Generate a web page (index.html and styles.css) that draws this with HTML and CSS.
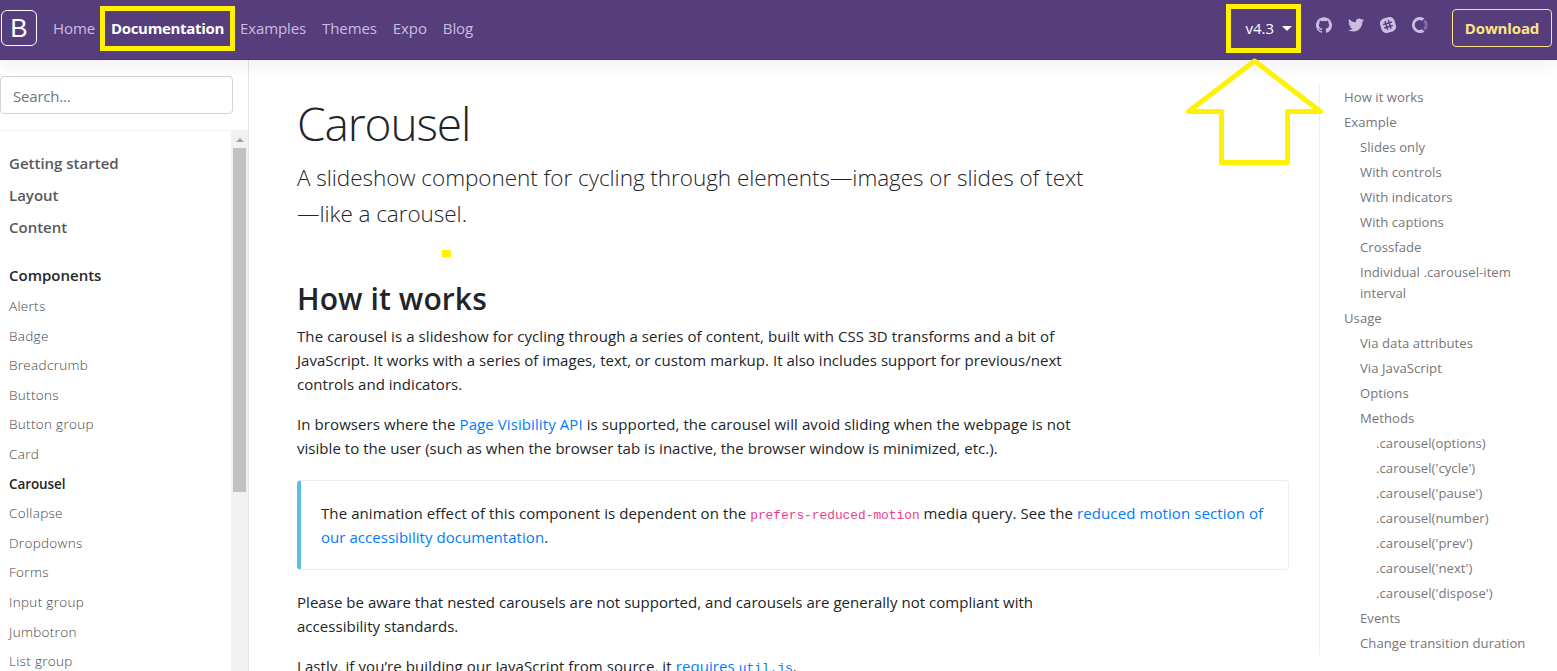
FILE: index.html
```html
<!DOCTYPE html>
<html lang="en">
<head>
<meta charset="utf-8">
<title>Carousel · Bootstrap</title>
<link rel="stylesheet" href="styles.css">
</head>
<body>
<header class="navbar">
  <a class="brand">B</a>
  <nav class="nav">
    <a>Home</a><a class="active">Documentation</a><a>Examples</a><a>Themes</a><a>Expo</a><a>Blog</a>
  </nav>
  <div class="version">v4.3<span class="caret"></span></div>
  <div class="social">
    <svg viewBox="0 0 24 24"><path d="M12 .297c-6.63 0-12 5.373-12 12 0 5.303 3.438 9.8 8.205 11.385.6.113.82-.258.82-.577 0-.285-.01-1.04-.015-2.04-3.338.724-4.042-1.61-4.042-1.61C4.422 18.07 3.633 17.7 3.633 17.7c-1.087-.744.084-.729.084-.729 1.205.084 1.838 1.236 1.838 1.236 1.07 1.835 2.809 1.305 3.495.998.108-.776.417-1.305.76-1.605-2.665-.3-5.466-1.332-5.466-5.93 0-1.31.465-2.38 1.235-3.22-.135-.303-.54-1.523.105-3.176 0 0 1.005-.322 3.3 1.23.96-.267 1.98-.399 3-.405 1.02.006 2.04.138 3 .405 2.28-1.552 3.285-1.23 3.285-1.23.645 1.653.24 2.873.12 3.176.765.84 1.23 1.91 1.23 3.22 0 4.61-2.805 5.625-5.475 5.92.42.36.81 1.096.81 2.22 0 1.606-.015 2.896-.015 3.286 0 .315.21.69.825.57C20.565 22.092 24 17.592 24 12.297c0-6.627-5.373-12-12-12"/></svg>
    <svg viewBox="0 0 24 24"><path d="M23.954 4.569c-.885.389-1.83.654-2.825.775 1.014-.611 1.794-1.574 2.163-2.723-.951.555-2.005.959-3.127 1.184-.896-.959-2.173-1.559-3.591-1.559-2.717 0-4.92 2.203-4.92 4.917 0 .39.045.765.127 1.124C7.691 8.094 4.066 6.13 1.64 3.161c-.427.722-.666 1.561-.666 2.475 0 1.71.87 3.213 2.188 4.096-.807-.026-1.566-.248-2.228-.616v.061c0 2.385 1.693 4.374 3.946 4.827-.413.111-.849.171-1.296.171-.314 0-.615-.03-.916-.086.631 1.953 2.445 3.377 4.604 3.417-1.68 1.319-3.809 2.105-6.102 2.105-.39 0-.779-.023-1.17-.067 2.189 1.394 4.768 2.209 7.557 2.209 9.054 0 13.999-7.496 13.999-13.986 0-.209 0-.42-.015-.63.961-.689 1.8-1.56 2.46-2.548z"/></svg>
    <svg viewBox="0 0 24 24"><g transform="rotate(-17 12 12)"><rect x=".8" y=".8" width="22.400" height="22.400" rx="7.5"/><path class="hash" d="M9.4 5.2v13.600M14.6 5.2v13.600M5.2 9.4h13.600M5.2 14.6h13.600"/></g></svg>
    <svg viewBox="0 0 24 24"><path d="M18.6 2A12 12 0 1 0 18.600 22L15.300 18.300A7.300 7.300 0 1 1 15.300 5.700z"/><path opacity=".4" d="M20.200 3.600A12 12 0 0 1 20.200 20.400L17.200 17.200A7.600 7.600 0 0 0 17.200 6.800z"/></svg>
  </div>
  <a class="download">Download</a>
</header>
<div class="page">
  <aside class="sidebar">
    <div class="searchbar"><div class="search">Search...</div></div>
    <div class="scroller">
      <nav class="links">
        <a class="group">Getting started</a>
        <a class="group">Layout</a>
        <a class="group">Content</a>
        <a class="group current">Components</a>
        <ul>
          <li>Alerts</li><li>Badge</li><li>Breadcrumb</li><li>Buttons</li><li>Button group</li><li>Card</li><li class="on">Carousel</li><li>Collapse</li><li>Dropdowns</li><li>Forms</li><li>Input group</li><li>Jumbotron</li><li>List group</li>
        </ul>
      </nav>
      <div class="scrollbar"><i class="up"></i><i class="thumb"></i></div>
    </div>
  </aside>
  <main class="content">
    <h1>Carousel</h1>
    <p class="lead">A slideshow component for cycling through elements—images or slides of text<br>—like a carousel.</p>
    <h2>How it works</h2>
    <p><span class="open">The carousel is a slideshow for cycling through a series of content, built with CSS 3D transforms and a bit of</span><br>JavaScript. It works with a series of images, text, or custom markup. It also includes support for previous/next<br>controls and indicators.</p>
    <p><span class="open">In browsers where the <a>Page Visibility API</a> is supported, the carousel will avoid sliding when the webpage is not</span><br>visible to the user (such as when the browser tab is inactive, the browser window is minimized, etc.).</p>
    <div class="callout"><span class="open">The animation effect of this component is dependent on the <code>prefers-reduced-motion</code> media query. See the <a>reduced motion section of</a></span><br><a>our accessibility documentation</a>.</div>
    <p>Please be aware that nested carousels are not supported, and carousels are generally not compliant with<br>accessibility standards.</p>
    <p><span class="open">Lastly, if you’re building our JavaScript from source, it <a>requires <code>util.js</code></a>.</span></p>
  </main>
  <nav class="toc">
    <ul>
      <li>How it works</li>
      <li>Example
        <ul><li>Slides only</li><li>With controls</li><li>With indicators</li><li>With captions</li><li>Crossfade</li><li>Individual .carousel-item<br>interval</li></ul>
      </li>
      <li>Usage
        <ul><li>Via data attributes</li><li>Via JavaScript</li><li>Options</li><li>Methods
          <ul><li>.carousel(options)</li><li>.carousel('cycle')</li><li>.carousel('pause')</li><li>.carousel(number)</li><li>.carousel('prev')</li><li>.carousel('next')</li><li>.carousel('dispose')</li></ul>
        </li><li>Events</li><li>Change transition duration</li></ul>
      </li>
    </ul>
  </nav>
</div>
<svg class="marks" viewBox="0 0 1557 671">
  <rect x="102.5" y="8.5" width="130" height="40"/>
  <rect x="1228.5" y="6.5" width="70" height="44"/>
  <path d="M1254.500 61L1188.500 111.500H1221.500V162.500H1287.500V111.500H1320.500z"/>
  <rect class="dot" x="442" y="250" width="9" height="7"/>
</svg>
</body>
</html>
```
FILE: styles.css
```css
* { box-sizing: border-box; }
body {
  margin: 0;
  height: 671px;
  overflow: hidden;
  background: #fff;
  color: #212529;
  font: 15px/24px "Open Sans", "Noto Sans", sans-serif;
  white-space: nowrap;
}
ul { list-style: none; margin: 0; padding: 0; }
a { color: #007bff; text-decoration: none; }

.navbar {
  position: relative;
  z-index: 2;
  display: flex;
  align-items: center;
  height: 60px;
  padding: 0 5px 4px 1px;
  background: #563d7c;
  box-shadow: 0 8px 16px rgba(0, 0, 0, .05), inset 0 -1px 0 rgba(0, 0, 0, .1);
}
.brand {
  width: 36px;
  height: 36px;
  border: 1px solid #fff;
  border-radius: 6px;
  color: #fff;
  font: 26px/34px "Liberation Sans", sans-serif;
  text-align: center;
}
.nav { display: flex; flex: 1; margin-left: 16px; gap: 16px; }
.nav a { color: #cbbde2; letter-spacing: -.1px; }
.nav .active { color: #fff; font-weight: 700; letter-spacing: -.33px; }
.version { display: flex; align-items: center; gap: 8px; color: #fff; margin-right: 24px; }
.caret { border: 5px solid transparent; border-top-color: #fff; border-bottom: 0; }
.social { display: flex; gap: 16px; margin: 0 24px 6px 0; }
.social svg { width: 16px; height: 16px; fill: #cbbde2; }
.hash { fill: none; stroke: #563d7c; stroke-width: 2.2; }
.download {
  width: 100px;
  height: 38px;
  border: 1px solid #ffe484;
  border-radius: 4px;
  color: #ffe484;
  font-weight: 700;
  letter-spacing: -.15px;
  line-height: 36px;
  text-align: center;
}

.page { display: grid; grid-template-columns: 249px 1070px 238px; height: 611px; }
.sidebar { display: flex; flex-direction: column; height: 611px; border-right: 1px solid #e5e5e5; }
.searchbar { height: 71px; padding: 16px 15px 0 0; border-bottom: 1px solid #f2f2f2; }
.search {
  height: 38px;
  padding: 0 12px;
  border: 1px solid #ced4da;
  border-radius: 4px;
  color: #6c757d;
  letter-spacing: -.2px;
  line-height: 38px;
}
.scroller { display: flex; flex: 1; min-height: 0; overflow: hidden; }
.links { flex: 1; padding: 16px 0 0 9px; }
.group { display: block; height: 32px; color: #595959; font-weight: 600; line-height: 32px; }
.group.current { margin-top: 16px; color: #262626; }
.links ul { padding-top: 1px; }
.links li { height: 29.6px; color: #444; font-size: 13.500px; font-weight: 300; letter-spacing: .32px; line-height: 29.6px; }
.links .on { color: #262626; font-weight: 600; letter-spacing: -.1px; }
.scrollbar { display: flex; flex-direction: column; align-items: center; width: 17px; background: #f1f1f1; }
.up { margin: 7px 0 6px; border: 4px solid transparent; border-bottom-color: #a3a3a3; border-top: 0; }
.thumb { width: 13px; height: 344px; background: #c1c1c1; }

.content { padding: 34px 30px 0 48px; }
h1 { margin: 0 0 8px; font-size: 46px; font-weight: 300; letter-spacing: -1.1px; line-height: 58px; }
p { margin: 0 0 16px; letter-spacing: .035px; }
.open { letter-spacing: .09px; }
.lead { margin-bottom: 48px; font-size: 22.500px; font-weight: 300; letter-spacing: -.04px; line-height: 36px; }
h2 { margin: 0 0 6px; font-size: 30px; font-weight: 600; letter-spacing: .1px; line-height: 38px; }
code { color: #e83e8c; font: 12.830px/1 "Liberation Mono", monospace; letter-spacing: 0; }
a code { color: inherit; }
.callout {
  height: 90px;
  margin: 20px 0;
  padding: 20px;
  border: 1px solid #eee;
  border-left: 4px solid #5bc0de;
  border-radius: 4px;
  letter-spacing: .04px;
}
.toc { height: 571px; margin-top: 24px; padding-left: 24px; border-left: 1px solid #eee; color: #77757a; font-size: 13.100px; letter-spacing: .05px; line-height: 21px; }
.toc li { margin-bottom: 4px; }
.toc li li:last-child { margin-bottom: 0; }
.toc ul ul { margin-top: 4px; padding-left: 16px; }
.toc > ul { padding-top: 3px; }

.marks { position: absolute; z-index: 3; top: 0; left: 0; width: 1557px; height: 671px; fill: none; stroke: #fff200; stroke-width: 5; pointer-events: none; }
.marks path { stroke-linejoin: round; }
.marks .dot { fill: #fff200; stroke: none; }
```
